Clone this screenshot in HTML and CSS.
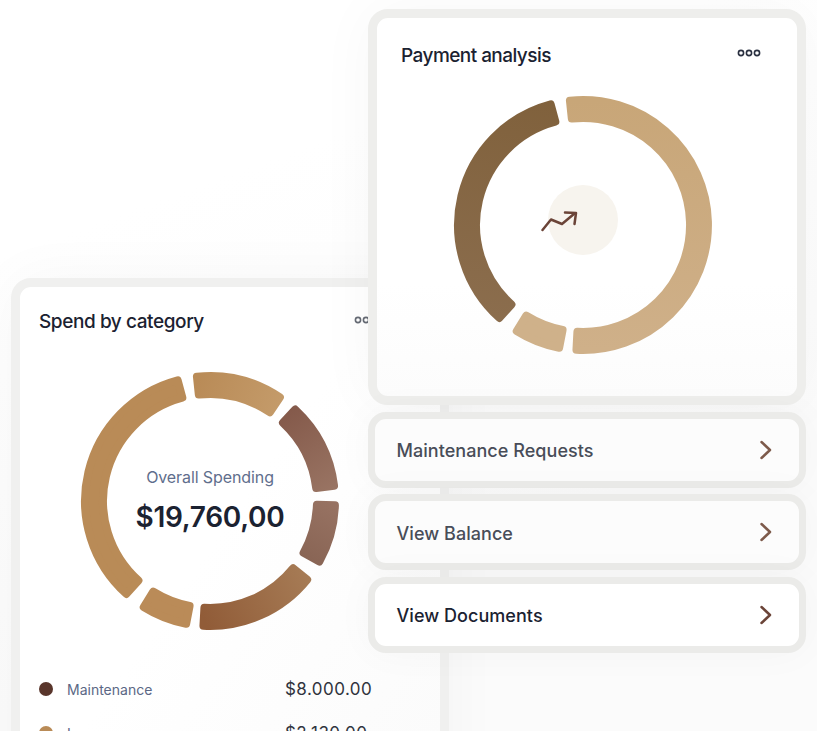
FILE: index.html
```html
<!DOCTYPE html>
<html lang="en">
<head>
    <meta charset="UTF-8">
    <meta name="viewport" content="width=device-width, initial-scale=1.0">
    <title>Dashboard cards</title>
    <link rel="stylesheet" href="styles.css">
</head>
<body>
    <div class="stage">
        <!-- Spend card sits behind the right column -->
        <section class="card spend-card">
            <header class="card-header">
                <h2>Spend by category</h2>
                <svg class="dots dots-faded" width="24" height="8" viewBox="0 0 24 8"><circle cx="4" cy="4" r="2.6"/><circle cx="12" cy="4" r="2.6"/><circle cx="20" cy="4" r="2.6"/></svg>
            </header>
            <div class="donut">
                <svg width="260" height="260" viewBox="0 0 260 260">
                    <defs>
                        <linearGradient id="gradB" gradientUnits="userSpaceOnUse" x1="117" y1="10" x2="200" y2="40"><stop offset="0" stop-color="#b98b57"/><stop offset="1" stop-color="#c49b6a"/></linearGradient>
                        <linearGradient id="gradC" gradientUnits="userSpaceOnUse" x1="205" y1="40" x2="258" y2="115"><stop offset="0" stop-color="#84594a"/><stop offset="1" stop-color="#997463"/></linearGradient>
                        <linearGradient id="gradD" gradientUnits="userSpaceOnUse" x1="255" y1="135" x2="222" y2="190"><stop offset="0" stop-color="#977262"/><stop offset="1" stop-color="#886454"/></linearGradient>
                        <linearGradient id="gradE" gradientUnits="userSpaceOnUse" x1="125" y1="250" x2="228" y2="205"><stop offset="0" stop-color="#915c38"/><stop offset="1" stop-color="#a67b55"/></linearGradient>
                    </defs>
                    <path class="seg" fill="#b98b57" stroke="#b98b57" d="M46.36 222.89A125 125 0 0 1 97.65 9.26L102.31 26.65A107 107 0 0 0 58.40 209.51Z"/>
                    <path class="seg" fill="url(#gradB)" stroke="url(#gradB)" d="M116.93 5.68A125 125 0 0 1 199.90 26.37L189.83 41.30A107 107 0 0 0 118.82 23.59Z"/>
                    <path class="seg" fill="url(#gradC)" stroke="url(#gradC)" d="M215.25 38.58A125 125 0 0 1 254.07 114.77L236.20 116.96A107 107 0 0 0 202.97 51.74Z"/>
                    <path class="seg" fill="url(#gradD)" stroke="url(#gradD)" d="M254.92 134.36A125 125 0 0 1 239.33 190.60L223.58 181.87A107 107 0 0 0 236.94 133.73Z"/>
                    <path class="seg" fill="url(#gradE)" stroke="url(#gradE)" d="M227.14 208.66A125 125 0 0 1 123.46 254.83L124.40 236.85A107 107 0 0 0 213.15 197.34Z"/>
                    <path class="seg" fill="#ba8b58" stroke="#ba8b58" d="M106.15 252.70A125 125 0 0 1 63.76 236.00L73.30 220.74A107 107 0 0 0 109.58 235.03Z"/>
                </svg>
                <div class="donut-total">
                    <p class="total-label">Overall Spending</p>
                    <p class="total-value">$19,760,00</p>
                </div>
            </div>
            <ul class="legend">
                <li class="legend-row"><span class="legend-dot dot-maintenance"></span><span class="legend-name">Maintenance</span><span class="legend-amount">$8.000.00</span></li>
                <li class="legend-row"><span class="legend-dot dot-loan"></span><span class="legend-name">Loan</span><span class="legend-amount">$2.130.00</span></li>
            </ul>
        </section>

        <div class="right-column">
            <section class="card payment-card">
                <header class="card-header">
                    <h2>Payment analysis</h2>
                    <svg class="dots" width="24" height="8" viewBox="0 0 24 8"><circle cx="4" cy="4" r="2.6"/><circle cx="12" cy="4" r="2.6"/><circle cx="20" cy="4" r="2.6"/></svg>
                </header>
                <div class="donut">
                    <svg width="260" height="260" viewBox="0 0 260 260">
                        <defs>
                            <linearGradient id="gradTan" gradientUnits="userSpaceOnUse" x1="130" y1="5" x2="130" y2="255"><stop offset="0" stop-color="#c8a678"/><stop offset="1" stop-color="#cfb089"/></linearGradient>
                            <linearGradient id="gradDark" gradientUnits="userSpaceOnUse" x1="100" y1="5" x2="60" y2="225"><stop offset="0" stop-color="#80613c"/><stop offset="1" stop-color="#8b6d4d"/></linearGradient>
                        </defs>
                        <path class="seg" fill="url(#gradDark)" stroke="url(#gradDark)" d="M46.36 222.89A125 125 0 0 1 97.65 9.26L102.31 26.65A107 107 0 0 0 58.40 209.51Z"/>
                        <path class="seg" fill="url(#gradTan)" stroke="url(#gradTan)" d="M116.93 5.68A125 125 0 1 1 123.46 254.83L124.40 236.85A107 107 0 1 0 118.82 23.59Z"/>
                        <path class="seg" fill="#cfb18a" stroke="#cfb18a" d="M106.15 252.70A125 125 0 0 1 63.76 236.00L73.30 220.74A107 107 0 0 0 109.58 235.03Z"/>
                    </svg>
                    <div class="trend-badge">
                        <svg class="trend-icon" width="38" height="22" viewBox="0 0 38 22"><path d="M1.5 19L10 8.5L21 13L33.5 2.5"/><path d="M24 1.5L35 2L33.5 13"/></svg>
                    </div>
                </div>
            </section>

            <a class="link-row row-faded" href="#"><span>Maintenance Requests</span><svg class="chevron" width="14" height="20" viewBox="0 0 14 20"><path d="M2.5 2L11 10L2.5 18"/></svg></a>
            <a class="link-row row-faded" href="#"><span>View Balance</span><svg class="chevron" width="14" height="20" viewBox="0 0 14 20"><path d="M2.5 2L11 10L2.5 18"/></svg></a>
            <a class="link-row" href="#"><span>View Documents</span><svg class="chevron" width="14" height="20" viewBox="0 0 14 20"><path d="M2.5 2L11 10L2.5 18"/></svg></a>
        </div>
    </div>
</body>
</html>
```

FILE: styles.css
```css
* {
    box-sizing: border-box;
    margin: 0;
    padding: 0;
}

html, body {
    height: 100%;
    overflow: hidden;
}

body {
    font-family: 'Inter', 'Open Sans', sans-serif;
    background: linear-gradient(160deg, #fff 25%, #fbfbfb 70%);
    color: #1b2231;
}

/* both blocks share one grid cell so they can overlap */
.stage {
    display: grid;
    grid-template-columns: 1fr;
    align-items: start;
}

.spend-card, .right-column {
    grid-area: 1 / 1;
}

.card {
    width: 438px;
    border: 9px solid #eeeeec;
    border-radius: 20px;
    box-shadow: 0 0 60px rgba(0, 0, 0, 0.035);
}

.spend-card {
    margin: 278px 0 0 11px;
    height: 600px;
    border-color: #f0f0ef;
    background: linear-gradient(125deg, #fff 45%, #fafafa 100%);
}

.right-column {
    margin: 9px 0 0 368px;
    width: 438px;
    display: flex;
    flex-direction: column;
    gap: 6.5px;
    position: relative;
}

.payment-card {
    height: 396px;
    background: linear-gradient(180deg, #fff 70%, #fcfcfc 100%);
}

.card-header {
    display: flex;
    justify-content: space-between;
    align-items: center;
    height: 26px;
}

.spend-card .card-header {
    margin: 22px 62px 0 19px;
}

.payment-card .card-header {
    margin: 25px 36px 0 24px;
}

.card-header h2 {
    font-size: 19px;
    line-height: 26px;
    font-weight: 500;
    letter-spacing: -0.42px;
}

.payment-card h2 {
    letter-spacing: -0.55px;
}

.dots {
    fill: none;
    stroke: #2a3040;
    stroke-width: 1.6;
    margin-top: -6px;
}

.dots-faded {
    stroke: #666b75;
    margin-top: -4px;
}

.donut {
    position: relative;
    width: 260px;
    height: 260px;
}

.donut > svg {
    display: block;
}

.seg {
    stroke-width: 8;
    stroke-linejoin: round;
}

.spend-card .donut {
    margin: 36px 0 0 60px;
}

.payment-card .donut {
    margin: 26px 0 0 76px;
}

.donut-total {
    position: absolute;
    top: 95px;
    left: 0;
    width: 260px;
    text-align: center;
}

.total-label {
    font-size: 16px;
    line-height: 22px;
    color: #5f6e8c;
    letter-spacing: -0.1px;
}

.total-value {
    margin-top: 10px;
    font-size: 28px;
    line-height: 38px;
    font-weight: 600;
    letter-spacing: -0.3px;
}

.trend-badge {
    position: absolute;
    left: 95px;
    top: 90px;
    width: 70px;
    height: 70px;
    border-radius: 50%;
    background: #f7f4ee;
}

.trend-icon {
    position: absolute;
    left: -7px;
    top: 26px;
    fill: none;
    stroke: #6b4438;
    stroke-width: 2.5;
    stroke-linecap: round;
    stroke-linejoin: round;
}

.legend {
    list-style: none;
    margin-top: 36px;
    padding: 0 68px 0 19px;
}

.legend-row {
    display: flex;
    align-items: center;
    height: 44px;
}

.legend-dot {
    width: 14px;
    height: 14px;
    border-radius: 50%;
    margin-right: 14px;
}

.dot-maintenance {
    background: #59352b;
}

.dot-loan {
    background: #b98b57;
}

.legend-name {
    flex: 1;
    font-size: 14px;
    color: #5b6785;
}

.legend-amount {
    width: 87px;
    font-size: 17px;
    letter-spacing: 0.45px;
    color: #30343e;
}

.link-row {
    display: flex;
    justify-content: space-between;
    align-items: center;
    height: 76px;
    padding: 0 26px 0 21.5px;
    border: 7.5px solid #ebebe9;
    border-radius: 18px;
    background: #fff;
    box-shadow: 0 0 40px rgba(0, 0, 0, 0.03);
    font-size: 18px;
    font-weight: 500;
    letter-spacing: 0.05px;
    color: #1b2231;
    text-decoration: none;
}

.link-row span {
    margin-top: 2px;
}

.row-faded {
    background: #fcfcfc;
    color: #484d58;
}

.chevron {
    fill: none;
    stroke: #6b4438;
    stroke-width: 2.5;
    stroke-linecap: round;
    stroke-linejoin: round;
}

.row-faded .chevron {
    stroke: #7d5a4b;
}
```
